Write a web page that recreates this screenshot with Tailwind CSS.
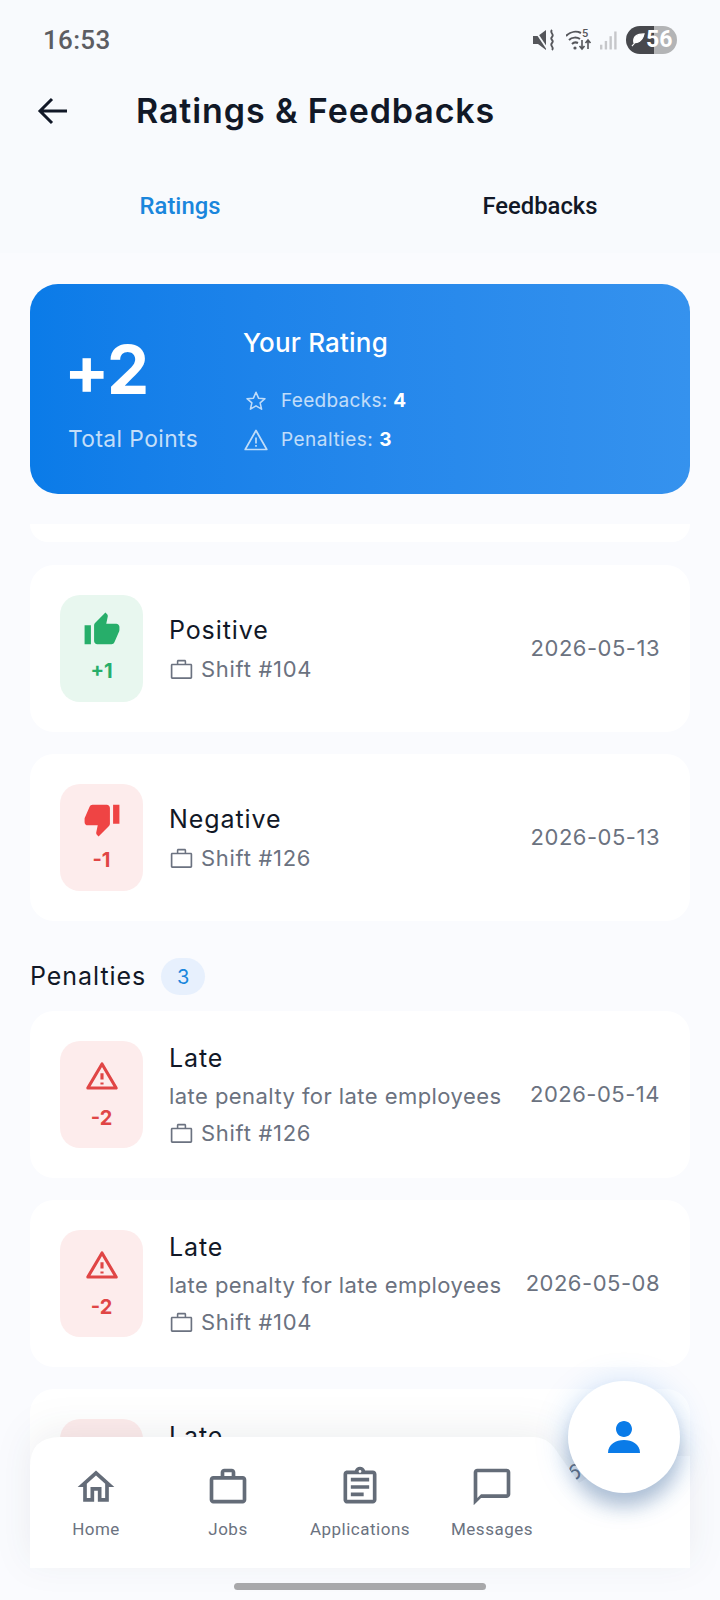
<!DOCTYPE html>
<html><head><meta charset="utf-8">
<script src="https://cdn.jsdelivr.net/npm/@tailwindcss/browser@4"></script>
</head>
<body class="m-0">
<div class="relative w-[720px] h-[1600px] overflow-hidden bg-[#fafbfe] font-['Inter',sans-serif] text-[#111827]">
  <!-- top -->
  <div class="bg-[#f8fafd] h-[253px]">
    <div class="h-[75px] flex items-start pl-[43px] pt-[24px]">
      <span class="font-['Roboto',sans-serif] font-medium text-[26px] leading-[32px] text-[#5c5d62] tracking-[0.3px]">16:53</span>
      <div class="ml-auto mr-[43px] flex items-center h-[32px]">
        <svg class="w-[23px] h-[24px]" viewBox="0 0 23 24"><path fill="#55565b" d="M0 8h5l8-6v20l-8-6H0z"/><path d="M1 1l14 21" stroke="#f8fafd" stroke-width="1.800"/><path d="M19 2c-3 3 3 4 0 7s3 3 0 6 3 4 0 7" fill="none" stroke="#55565b" stroke-width="1.800"/></svg>
        <svg class="w-[26px] h-[24px] ml-[10px]" viewBox="0 0 26 24"><path d="M0 8c5-5 11-5 15-3M3 12c3-3 8-3 11-1M6 16c2-2 4-2 6-1" fill="none" stroke="#55565b" stroke-width="2"/><circle cx="9" cy="20" r="1.600" fill="#55565b"/><text x="16" y="9" font-family="Roboto" font-size="11" font-weight="500" fill="#55565b">5</text><path d="M16 12v9m-2.500-3 2.500 3 2.500-3M22 21v-9m-2.500 3 2.500-3 2.500 3" fill="none" stroke="#55565b" stroke-width="1.600"/></svg>
        <svg class="w-[18px] h-[22px] ml-[8px]" viewBox="0 0 19 22"><g fill="#c6c7ca"><rect x="0" y="16" width="2.500" height="5"/><rect x="5" y="12" width="2.500" height="9"/><rect x="10" y="7" width="2.500" height="14"/><rect x="15" y="2" width="2.500" height="19"/></g></svg>
        <div class="relative ml-[8px] w-[51px] h-[28px] rounded-full overflow-hidden flex">
          <div class="w-[28px] bg-[#47484d]"></div><div class="flex-1 bg-[#b3b4b6]"></div>
          <svg class="absolute left-[5px] top-[7px] w-[14px] h-[14px]" viewBox="0 0 15 15"><path fill="#fff" d="M14 1C6 1 2 4 3 10c4 1 9-1 11-9zM1 14l6-7" stroke="#fff" stroke-width="1.200"/></svg>
          <span class="absolute left-[20px] top-0 font-['Roboto',sans-serif] font-bold text-[23px] leading-[28px] text-white">56</span>
        </div>
      </div>
    </div>
    <div class="h-[72px] flex items-center pl-[37px]">
      <svg class="w-[32px] h-[32px]" viewBox="0 0 32 32"><path d="M30 16H4M15 4 3 16l12 12" fill="none" stroke="#111827" stroke-width="3"/></svg>
      <span class="ml-[67px] font-semibold text-[34px] leading-[40px] text-[#111827] tracking-[0.9px]">Ratings &amp; Feedbacks</span>
    </div>
    <div class="grid grid-cols-2 mt-[44px] font-['Roboto',sans-serif] font-medium text-[23.800px] leading-[30px] text-center">
      <span class="text-[#1a86dc]">Ratings</span>
      <span class="text-[#111827]">Feedbacks</span>
    </div>
  </div>

  <!-- hero -->
  <div class="mx-[30px] mt-[31px] h-[210px] rounded-[28px] bg-gradient-to-r from-[#0a7be8] to-[#3592ee] flex text-white pl-[38px]">
    <div class="w-[175px] pt-[48px]">
      <div class="font-bold text-[67px] leading-[76px] tracking-[-1px] -ml-[4px]">+2</div>
      <div class="mt-[17px] text-[22.800px] leading-[28px] text-white/75 tracking-[0.4px]">Total Points</div>
    </div>
    <div class="pt-[43px]">
      <div class="font-medium text-[26px] leading-[32px] tracking-[0.2px]">Your Rating</div>
      <div class="mt-[28px] flex items-center h-[28px]">
        <svg class="w-[22px] h-[22px] ml-[2px]" viewBox="0 0 24 24"><path d="M12 2.500l2.800 6.400 7 .6-5.300 4.600 1.600 6.800-6.100-3.600-6.100 3.600 1.600-6.800-5.300-4.600 7-.6z" fill="none" stroke="#fff" stroke-opacity=".72" stroke-width="1.700" stroke-linejoin="round"/></svg>
        <span class="ml-[14px] text-[19px] text-white/72 tracking-[0.3px]">Feedbacks: <b class="font-bold text-white">4</b></span>
      </div>
      <div class="mt-[11px] flex items-center h-[28px]">
        <svg class="w-[24px] h-[24px] ml-[1px]" viewBox="0 0 24 24"><path d="M12 2.500 22.800 21.500H1.200z" fill="none" stroke="#fff" stroke-opacity=".72" stroke-width="1.700" stroke-linejoin="round"/><path d="M12 9.500v6M12 17v1.800" stroke="#fff" stroke-opacity=".72" stroke-width="1.700"/></svg>
        <span class="ml-[13px] text-[19px] text-white/72 tracking-[0.5px]">Penalties: <b class="font-bold text-white">3</b></span>
      </div>
    </div>
  </div>

  <!-- list -->
  <div class="mt-[30px] h-[1076px] overflow-hidden">
    <div class="mx-[30px] h-[18px] bg-white rounded-b-[22px] mb-[23px]"></div>

    <div class="mx-[30px] h-[167px] mb-[22px] bg-white rounded-[24px] flex items-center px-[30px]">
      <div class="w-[83px] h-[107px] rounded-[20px] bg-[#e8f7ef] flex flex-col items-center pt-[16px] text-[#27ae6a]">
        <svg class="w-[38px] h-[38px]" viewBox="0 0 24 24"><path fill="#27ae6a" d="M1 21h4V9H1v12zm22-11c0-1.100-.9-2-2-2h-6.310l.95-4.570.03-.32c0-.41-.17-.79-.44-1.060L14.170 1 7.590 7.590C7.220 7.950 7 8.450 7 9v10c0 1.100.9 2 2 2h9c.83 0 1.540-.5 1.840-1.220l3.020-7.050c.09-.23.14-.47.14-.73v-2z"/></svg>
        <span class="mt-[9px] font-bold text-[20px] leading-[26px]">+1</span>
      </div>
      <div class="ml-[26px]">
        <div class="text-[25px] leading-[32px] tracking-[0.9px]">Positive</div>
        <div class="mt-[9px] flex items-center text-[#6b7280] text-[22px] leading-[28px] tracking-[0.7px]">
          <svg class="w-[25px] h-[25px]" viewBox="0 0 24 24"><path fill="#6b7280" d="M15 6.500V4.200H9v2.300h6zM3.300 8v11.500h17.400V8H3.300zm17.500-1.500c1 0 1.500.6 1.500 1.500v11.500c0 .9-.6 1.500-1.500 1.500H3.200c-1 0-1.500-.6-1.500-1.500V8c0-.9.500-1.500 1.500-1.500h4.300V4.200c0-.9.600-1.500 1.500-1.500h6c.9 0 1.500.6 1.500 1.500v2.300h4.800z"/></svg>
          <span class="ml-[7px]">Shift #104</span>
        </div>
      </div>
      <div class="ml-auto text-[#6b7280] text-[22px] tracking-[0.5px]">2026-05-13</div>
    </div>

    <div class="mx-[30px] h-[167px] bg-white rounded-[24px] flex items-center px-[30px]">
      <div class="w-[83px] h-[107px] rounded-[20px] bg-[#fdecec] flex flex-col items-center pt-[16px] text-[#e04545]">
        <svg class="w-[38px] h-[38px]" viewBox="0 0 24 24"><path fill="#ef4444" d="M15 3H6c-.83 0-1.540.5-1.840 1.220l-3.020 7.050c-.09.23-.14.47-.14.73v2c0 1.100.9 2 2 2h6.310l-.95 4.570-.03.32c0 .41.17.79.44 1.060L9.830 23l6.590-6.590c.36-.36.58-.86.58-1.410V5c0-1.100-.9-2-2-2zm4 0v12h4V3h-4z"/></svg>
        <span class="mt-[9px] font-bold text-[20px] leading-[26px]">-1</span>
      </div>
      <div class="ml-[26px]">
        <div class="text-[25px] leading-[32px] tracking-[0.9px]">Negative</div>
        <div class="mt-[9px] flex items-center text-[#6b7280] text-[22px] leading-[28px] tracking-[0.7px]">
          <svg class="w-[25px] h-[25px]" viewBox="0 0 24 24"><path fill="#6b7280" d="M15 6.500V4.200H9v2.300h6zM3.300 8v11.500h17.400V8H3.300zm17.500-1.500c1 0 1.500.6 1.500 1.500v11.500c0 .9-.6 1.500-1.500 1.500H3.200c-1 0-1.500-.6-1.500-1.500V8c0-.9.500-1.500 1.500-1.500h4.300V4.200c0-.9.600-1.500 1.500-1.500h6c.9 0 1.500.6 1.500 1.500v2.300h4.800z"/></svg>
          <span class="ml-[7px]">Shift #126</span>
        </div>
      </div>
      <div class="ml-auto text-[#6b7280] text-[22px] tracking-[0.5px]">2026-05-13</div>
    </div>

    <div class="mx-[30px] mt-[37px] mb-[16px] h-[37px] flex items-center">
      <span class="text-[25px] tracking-[0.95px]">Penalties</span>
      <span class="ml-[15px] w-[44px] h-[37px] rounded-full bg-[#e7f0fd] text-[#1a86dc] text-[20px] flex items-center justify-center">3</span>
    </div>

    <div class="mx-[30px] h-[167px] mb-[22px] bg-white rounded-[24px] flex items-center px-[30px]">
      <div class="w-[83px] h-[107px] rounded-[20px] bg-[#fdecec] flex flex-col items-center pt-[18px] text-[#e04545]">
        <svg class="w-[34px] h-[34px]" viewBox="0 0 24 24"><path d="M12 3.500 22 20.500H2z" fill="none" stroke="#e04545" stroke-width="2.200" stroke-linejoin="round"/><path d="M12 10v4.500M12 16.500v1.500" stroke="#e04545" stroke-width="2.200"/></svg>
        <span class="mt-[12px] font-bold text-[20px] leading-[26px]">-2</span>
      </div>
      <div class="ml-[26px]">
        <div class="text-[25px] leading-[32px] tracking-[0.9px]">Late</div>
        <div class="mt-[7px] text-[#6b7280] text-[22px] leading-[30px] tracking-[0.44px]">late penalty for late employees</div>
        <div class="mt-[8px] flex items-center text-[#6b7280] text-[22px] leading-[28px] tracking-[0.7px]">
          <svg class="w-[25px] h-[25px]" viewBox="0 0 24 24"><path fill="#6b7280" d="M15 6.500V4.200H9v2.300h6zM3.300 8v11.500h17.400V8H3.300zm17.500-1.500c1 0 1.500.6 1.500 1.500v11.500c0 .9-.6 1.500-1.500 1.500H3.200c-1 0-1.500-.6-1.500-1.500V8c0-.9.500-1.500 1.500-1.500h4.300V4.200c0-.9.600-1.500 1.500-1.500h6c.9 0 1.500.6 1.500 1.500v2.300h4.800z"/></svg>
          <span class="ml-[7px]">Shift #126</span>
        </div>
      </div>
      <div class="ml-auto text-[#6b7280] text-[22px] tracking-[0.5px]">2026-05-14</div>
    </div>

    <div class="mx-[30px] h-[167px] mb-[22px] bg-white rounded-[24px] flex items-center px-[30px]">
      <div class="w-[83px] h-[107px] rounded-[20px] bg-[#fdecec] flex flex-col items-center pt-[18px] text-[#e04545]">
        <svg class="w-[34px] h-[34px]" viewBox="0 0 24 24"><path d="M12 3.500 22 20.500H2z" fill="none" stroke="#e04545" stroke-width="2.200" stroke-linejoin="round"/><path d="M12 10v4.500M12 16.500v1.500" stroke="#e04545" stroke-width="2.200"/></svg>
        <span class="mt-[12px] font-bold text-[20px] leading-[26px]">-2</span>
      </div>
      <div class="ml-[26px]">
        <div class="text-[25px] leading-[32px] tracking-[0.9px]">Late</div>
        <div class="mt-[7px] text-[#6b7280] text-[22px] leading-[30px] tracking-[0.44px]">late penalty for late employees</div>
        <div class="mt-[8px] flex items-center text-[#6b7280] text-[22px] leading-[28px] tracking-[0.7px]">
          <svg class="w-[25px] h-[25px]" viewBox="0 0 24 24"><path fill="#6b7280" d="M15 6.500V4.200H9v2.300h6zM3.300 8v11.500h17.400V8H3.300zm17.500-1.500c1 0 1.500.6 1.500 1.500v11.500c0 .9-.6 1.500-1.500 1.500H3.200c-1 0-1.500-.6-1.500-1.500V8c0-.9.500-1.500 1.500-1.500h4.300V4.200c0-.9.600-1.500 1.500-1.500h6c.9 0 1.500.6 1.500 1.500v2.300h4.800z"/></svg>
          <span class="ml-[7px]">Shift #104</span>
        </div>
      </div>
      <div class="ml-auto text-[#6b7280] text-[22px] tracking-[0.5px]">2026-05-08</div>
    </div>

    <div class="mx-[30px] h-[167px] bg-white rounded-[24px] flex items-center px-[30px]">
      <div class="w-[83px] h-[107px] rounded-[20px] bg-[#fdecec]"></div>
      <div class="ml-[26px] h-[105px]">
        <div class="text-[25px] leading-[32px] tracking-[0.9px]">Late</div>
      </div>
      <div class="ml-auto text-[#6b7280] text-[22px] tracking-[0.5px]">2026-05-06</div>
    </div>
  </div>

  <!-- bottom nav (overlay) -->
  <svg class="absolute left-0 top-[1400px] w-[720px] h-[200px] drop-shadow-[0_-8px_18px_rgba(30,41,59,0.07)]" viewBox="0 1400 720 200"><path fill="#fff" d="M30 1568V1467Q30 1437 60 1437H530C548 1437 553 1445 560 1456L579 1483L600 1470L640 1456H690V1568Z"/></svg>
  <div class="absolute left-[30px] top-[1465px] w-[528px] grid grid-cols-4 text-center font-['Roboto',sans-serif] text-[17px] leading-[22px] text-[#6b7280] tracking-[0.5px]">
    <div class="flex flex-col items-center">
      <svg class="w-[44px] h-[44px]" viewBox="0 0 24 24"><path fill="#646c78" d="M12 5.690l5 4.500V18h-2v-6H9v6H7v-7.810l5-4.500M12 3L2 12h3v8h6v-6h2v6h6v-8h3L12 3z"/></svg>
      <span class="mt-[9px]">Home</span>
    </div>
    <div class="flex flex-col items-center">
      <svg class="w-[44px] h-[44px]" viewBox="0 0 24 24"><path fill="#646c78" d="M14 6V4h-4v2h4zM4 8v11h16V8H4zm16-2c1.110 0 2 .89 2 2v11c0 1.110-.89 2-2 2H4c-1.110 0-2-.89-2-2l.01-11c0-1.110.88-2 1.990-2h4V4c0-1.110.89-2 2-2h4c1.110 0 2 .89 2 2v2h4z"/></svg>
      <span class="mt-[9px]">Jobs</span>
    </div>
    <div class="flex flex-col items-center">
      <svg class="w-[44px] h-[44px]" viewBox="0 0 24 24"><path fill="#646c78" d="M7 15h7v2H7zm0-4h10v2H7zm0-4h10v2H7zm12-4h-4.180C14.400 1.840 13.300 1 12 1c-1.300 0-2.400.84-2.820 2H5c-.14 0-.27.01-.4.04-.39.08-.74.28-1.010.55-.18.18-.33.4-.43.64-.1.23-.16.49-.16.77v14c0 .27.06.54.16.78s.25.45.43.64c.27.27.62.47 1.010.55.13.02.26.03.4.03h14c1.100 0 2-.9 2-2V5c0-1.100-.9-2-2-2zm-7-.25c.41 0 .75.34.75.75s-.34.75-.75.75-.75-.34-.75-.75.34-.75.75-.75zM19 19H5V5h14v14z"/></svg>
      <span class="mt-[9px]">Applications</span>
    </div>
    <div class="flex flex-col items-center">
      <svg class="w-[44px] h-[44px]" viewBox="0 0 24 24"><path fill="#646c78" d="M20 2H4c-1.100 0-2 .9-2 2v18l4-4h14c1.100 0 2-.9 2-2V4c0-1.100-.9-2-2-2zm0 14H6l-2 2V4h16v12z"/></svg>
      <span class="mt-[9px]">Messages</span>
    </div>
  </div>
  <div class="absolute left-[568px] top-[1381px] w-[112px] h-[112px] rounded-full bg-white shadow-[0_14px_18px_rgba(60,90,130,0.30),0_4px_34px_rgba(20,120,230,0.22)] flex items-center justify-center">
    <svg class="w-[48px] h-[48px]" viewBox="0 0 24 24"><path fill="#0a7be8" d="M12 12c2.210 0 4-1.790 4-4s-1.790-4-4-4-4 1.790-4 4 1.790 4 4 4zm0 1.500c-4 0-8 2-8 6.500h16c0-4.500-4-6.500-8-6.500z"/></svg>
  </div>
  <div class="absolute left-[234px] top-[1583px] w-[252px] h-[7px] rounded-full bg-[#a8a8aa]"></div>
</div>
</body></html>
